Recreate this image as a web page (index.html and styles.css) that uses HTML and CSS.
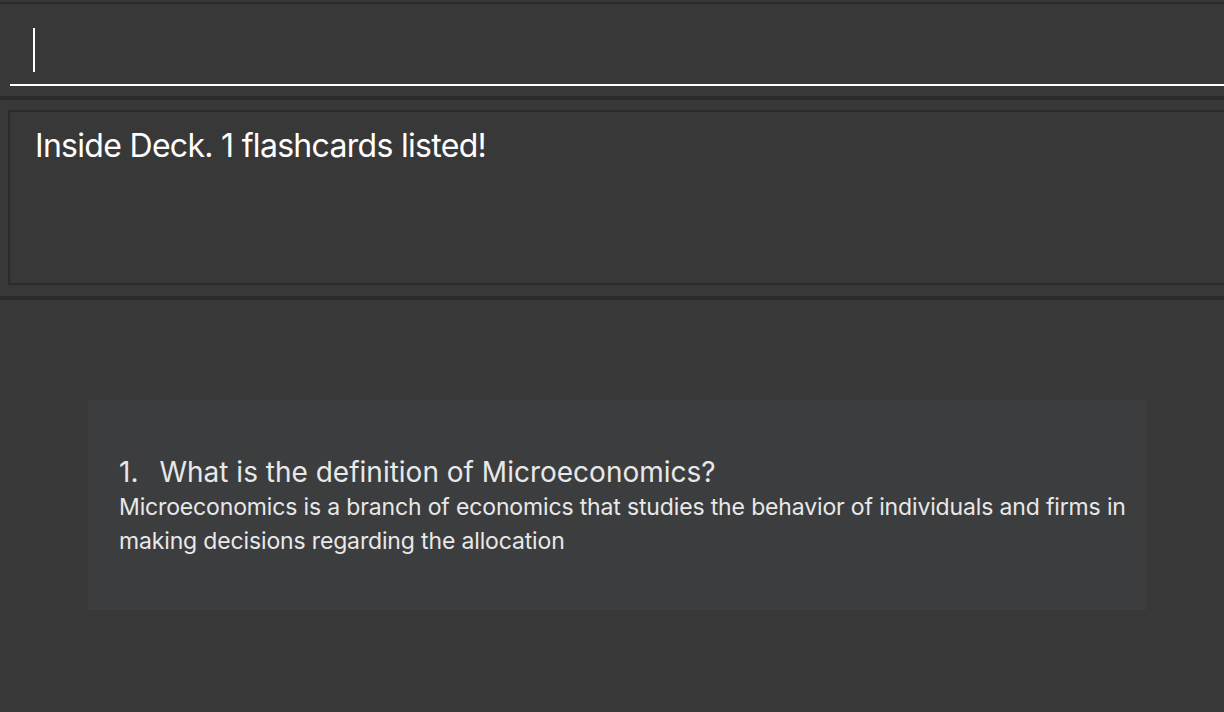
FILE: index.html
```html
<!DOCTYPE html>
<html>
<head>
<meta charset="utf-8">
<link rel="stylesheet" href="styles.css">
</head>
<body>
<div class="app">
  <div class="top-gap"></div>
  <div class="command-area">
    <div class="command-field"><span class="caret"></span></div>
  </div>
  <div class="result-area">
    <div class="result-box">
      <div class="result-text">Inside Deck. 1 flashcards listed!</div>
    </div>
  </div>
  <div class="list-area">
    <div class="card">
      <div class="question"><span class="num">1.</span>What is the definition of Microeconomics?</div>
      <div class="answer">Microeconomics is a branch of economics that studies the behavior of individuals and firms in making decisions regarding the allocation</div>
    </div>
  </div>
</div>
</body>
</html>
```
FILE: styles.css
```css
html, body {
  margin: 0;
  padding: 0;
  background: #383838;
  height: 100%;
  overflow: hidden;
}
.app {
  font-family: Inter, "Noto Sans", sans-serif;
  display: flex;
  flex-direction: column;
  height: 712px;
  width: 1224px;
}
.top-gap {
  height: 2px;
  border-bottom: 2px solid #2b2b2b;
}
.command-area {
  height: 92px;
  border-bottom: 4px solid #2b2b2b;
  display: flex;
  padding-left: 10px;
}
.command-field {
  flex: 1;
  border-bottom: 2px solid #ffffff;
  padding-left: 23px;
  padding-top: 24px;
  box-sizing: border-box;
  height: 82px;
}
.caret {
  display: block;
  width: 2px;
  height: 44px;
  background: #ffffff;
}
.result-area {
  border-bottom: 4px solid #2b2b2b;
  padding: 10px 0 0 8px;
  box-sizing: border-box;
  height: 200px;
}
.result-box {
  height: 175px;
  box-sizing: border-box;
  border: 2px solid #2b2b2b;
  border-right: none;
  padding: 15px 0 0 25px;
}
.result-text {
  color: #ffffff;
  font-size: 32px;
  letter-spacing: -0.7px;
  line-height: 38px;
}
.list-area {
  flex: 1;
  padding: 100px 0 0 88px;
}
.card {
  width: 1058px;
  height: 210px;
  box-sizing: border-box;
  background: #3c3d3f;
  padding: 54px 20px 0 31px;
}
.question {
  color: #e8e8e8;
  font-size: 28px;
  line-height: 36px;
  letter-spacing: 0;
}
.num {
  margin-right: 21px;
}
.answer {
  color: #e8e8e8;
  font-size: 23px;
  line-height: 34px;
  letter-spacing: -0.15px;
}
```
